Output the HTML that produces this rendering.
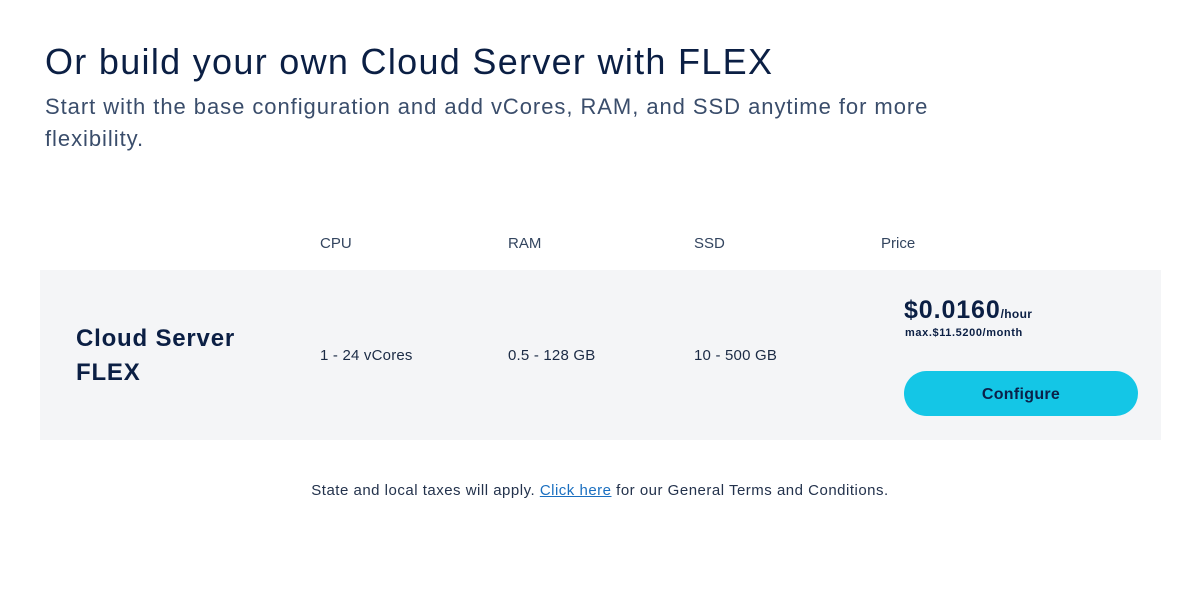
<!DOCTYPE html>
<html><head><meta charset="utf-8"><style>
body{margin:0;width:1200px;height:601px;background:#fff;font-family:"Liberation Sans",sans-serif;color:#001b41;position:relative;overflow:hidden}
.a{position:absolute;white-space:nowrap}
h1{position:absolute;left:45px;top:41px;margin:0;font-size:36px;font-weight:normal;letter-spacing:1.3px;color:#0b1f44}
.sub{position:absolute;left:45px;top:91px;width:920px;font-size:22px;line-height:32px;color:#3a4d6b;letter-spacing:0.95px}
.hd{font-size:15px;color:#33455f;top:235px}
.panel{position:absolute;left:40px;top:270px;width:1121px;height:170px;background:#f4f5f7}
.cell{font-size:15px;color:#1b2b45;top:347px;letter-spacing:0.2px}
.btn{position:absolute;left:904px;top:371px;width:234px;height:45px;border-radius:23px;background:#14c6e6;color:#0b2149;font-size:16px;text-align:center;line-height:47px;font-weight:bold;letter-spacing:0.3px}
.foot{position:absolute;left:0;width:1200px;text-align:center;top:482px;font-size:15px;color:#23324c;letter-spacing:0.5px}
.foot a{color:#1a6fc0;text-decoration:underline}
</style></head><body>
<h1>Or build your own Cloud Server with FLEX</h1>
<div class="sub">Start with the base configuration and add vCores, RAM, and SSD anytime for more flexibility.</div>
<div class="a hd" style="left:320px">CPU</div>
<div class="a hd" style="left:508px">RAM</div>
<div class="a hd" style="left:694px">SSD</div>
<div class="a hd" style="left:881px">Price</div>
<div class="panel"></div>
<div class="a" style="left:76px;top:322px;font-size:24px;font-weight:bold;line-height:34px;color:#0b1f44;letter-spacing:0.8px">Cloud Server<br>FLEX</div>
<div class="a cell" style="left:320px">1 - 24 vCores</div>
<div class="a cell" style="left:508px">0.5 - 128 GB</div>
<div class="a cell" style="left:694px">10 - 500 GB</div>
<div class="a" style="left:904px;top:296px;font-size:25px;font-weight:bold;color:#0b1f44;letter-spacing:0.9px">$0.0160<span style="font-size:12px;font-weight:bold;letter-spacing:0.3px">/hour</span></div>
<div class="a" style="left:905px;top:327px;font-size:11px;font-weight:bold;color:#0b1f44;letter-spacing:0.6px">max.$11.5200/month</div>
<div class="btn">Configure</div>
<div class="foot">State and local taxes will apply. <a>Click here</a> for our General Terms and Conditions.</div>
</body></html>
